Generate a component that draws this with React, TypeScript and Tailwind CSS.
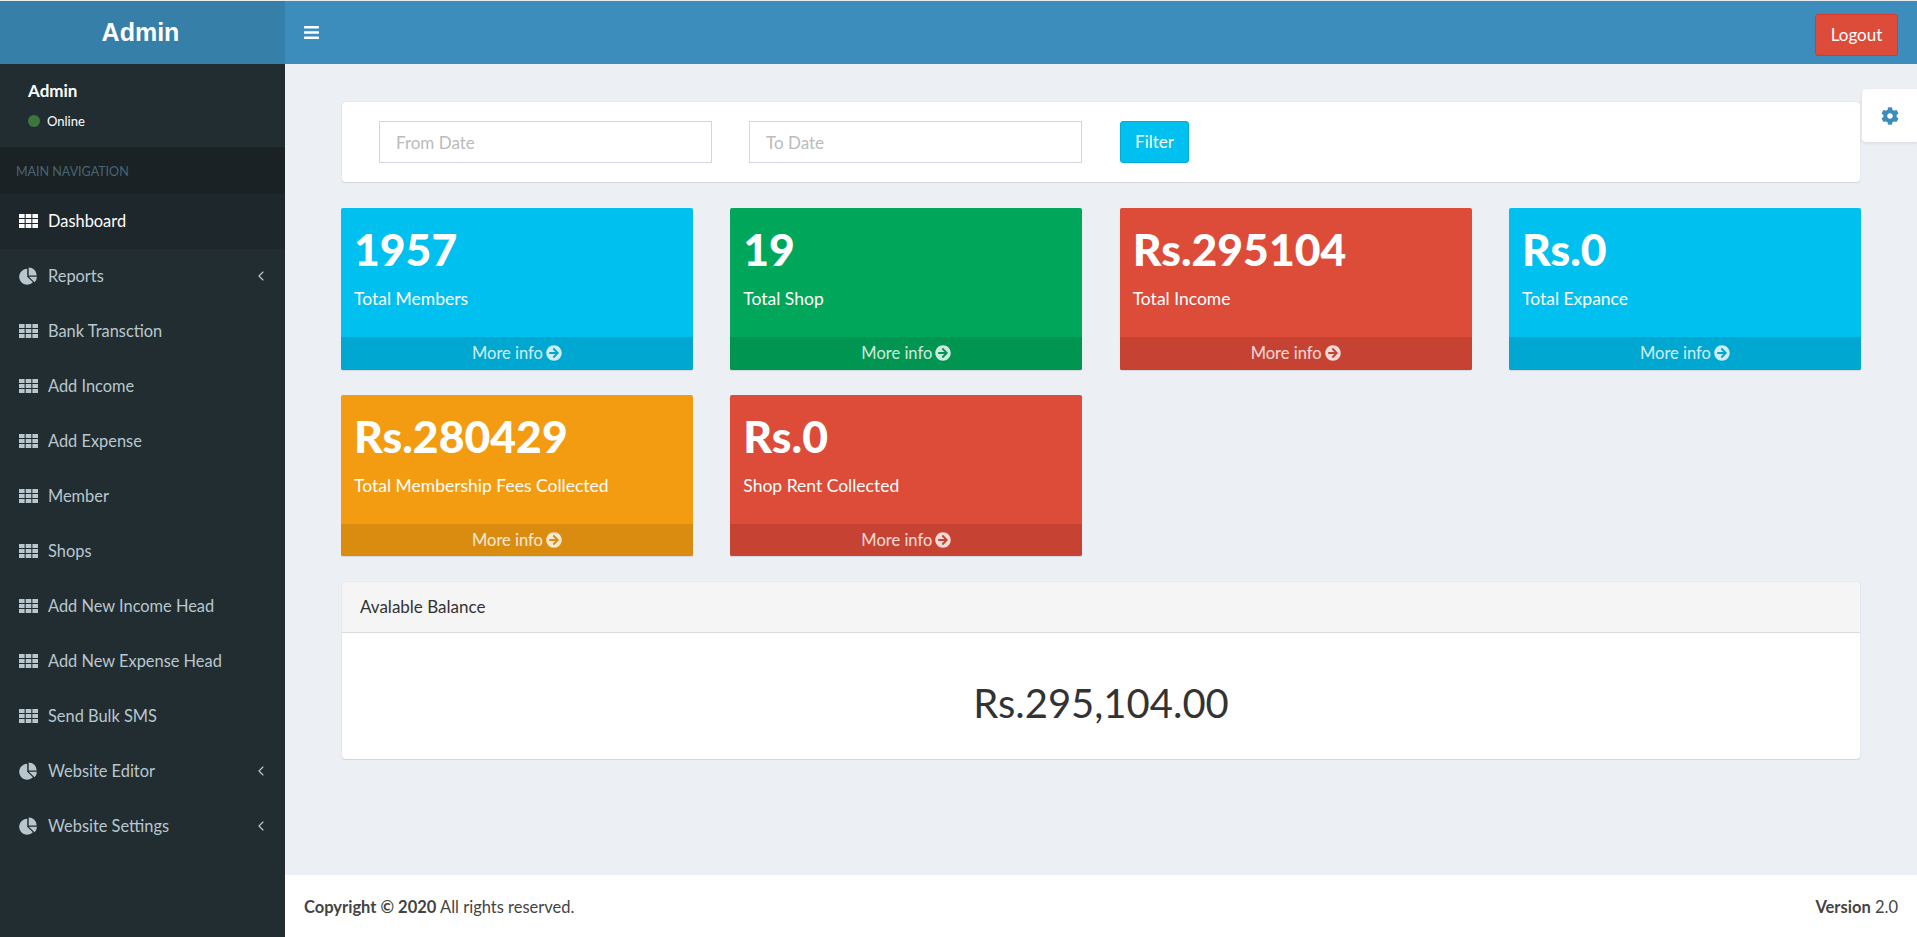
import { ChevronLeft } from "lucide-react";
import { FaArrowCircleRight, FaBars, FaCog } from "react-icons/fa";

const navItems = [
  { label: "Dashboard", icon: "th", active: true },
  { label: "Reports", icon: "pie", arrow: true },
  { label: "Bank Transction", icon: "th" },
  { label: "Add Income", icon: "th" },
  { label: "Add Expense", icon: "th" },
  { label: "Member", icon: "th" },
  { label: "Shops", icon: "th" },
  { label: "Add New Income Head", icon: "th" },
  { label: "Add New Expense Head", icon: "th" },
  { label: "Send Bulk SMS", icon: "th" },
  { label: "Website Editor", icon: "pie", arrow: true },
  { label: "Website Settings", icon: "pie", arrow: true },
];

const cards = [
  { value: "1957", label: "Total Members", bg: "bg-[#00c0ef]", foot: "bg-[#00a7d0]" },
  { value: "19", label: "Total Shop", bg: "bg-[#00a65a]", foot: "bg-[#009551]" },
  { value: "Rs.295104", label: "Total Income", bg: "bg-[#dd4b39]", foot: "bg-[#c64333]" },
  { value: "Rs.0", label: "Total Expance", bg: "bg-[#00c0ef]", foot: "bg-[#00a7d0]" },
  { value: "Rs.280429", label: "Total Membership Fees Collected", bg: "bg-[#f39c12]", foot: "bg-[#da8c10]" },
  { value: "Rs.0", label: "Shop Rent Collected", bg: "bg-[#dd4b39]", foot: "bg-[#c64333]" },
];

function ThIcon() {
  return (
    <svg width="19" height="14" viewBox="0 0 19 14" fill="currentColor" className="shrink-0">
      <path d="M0 0h5.6v3.9H0zM6.7 0h5.6v3.9H6.7zM13.4 0H19v3.9h-5.6zM0 5h5.6v4H0zM6.7 5h5.6v4H6.7zM13.4 5H19v4h-5.6zM0 10.1h5.6V14H0zM6.7 10.1h5.6V14H6.7zM13.4 10.1H19V14h-5.6z" />
    </svg>
  );
}

function PieIcon() {
  return (
    <svg width="19" height="18" viewBox="0 0 18 18" fill="currentColor" className="shrink-0">
      <path d="M7.7 9.7V1.7A8 8 0 1 0 13.36 15.36Z" />
      <path d="M9.2 0.5A8 8 0 0 1 17.2 8.5H9.2Z" />
      <path d="M9.4 9.7H17.4A8 8 0 0 1 15.06 15.36Z" />
    </svg>
  );
}

function Sidebar() {
  return (
    <aside className="flex w-[285px] shrink-0 flex-col bg-[#222d32]">
      <div className="flex h-[63px] items-center justify-center bg-[#367fa9] pr-[4px] font-['Liberation_Sans',sans-serif] text-[25px] font-bold text-white">
        Admin
      </div>
      <div className="h-[83px] pl-[28px] pt-[17px] text-white">
        <p className="text-[17px] leading-[20px] font-bold">Admin</p>
        <div className="mt-[12px] flex items-center gap-[7px] text-[13px] leading-[16px]">
          <span className="h-3 w-3 rounded-full bg-[#3c763d]" />
          Online
        </div>
      </div>
      <div className="flex h-[47px] items-center bg-[#1a2226] pl-[16px] pt-[3px] text-[12.5px] text-[#4b646f]">
        MAIN NAVIGATION
      </div>
      {navItems.map((item) => (
        <div
          key={item.label}
          className={`flex h-[55px] items-center pb-[1px] pl-[19px] pr-[16px] text-[16.4px] ${item.active ? "bg-[#1e282c] text-white" : "text-[#b8c7ce]"}`}
        >
          {item.icon === "th" ? <ThIcon /> : <PieIcon />}
          <span className="ml-[10px]">{item.label}</span>
          {item.arrow && <ChevronLeft className="ml-auto h-[16px] w-[16px]" strokeWidth={1.75} />}
        </div>
      ))}
    </aside>
  );
}

function StatCard({ card }: { card: (typeof cards)[number] }) {
  return (
    <div className={`flex h-[161.6px] flex-col overflow-hidden rounded-[2px] text-white shadow-[0_1px_1px_rgba(0,0,0,0.1)] ${card.bg}`}>
      <div className="h-[129px] shrink-0 px-[13px] pt-[13px]">
        <p className="text-[44.5px] leading-[56px] font-black">{card.value}</p>
        <p className="mt-[10px] text-[17.5px] leading-[24px]">{card.label}</p>
      </div>
      <div className={`flex flex-1 items-center justify-center gap-[3px] text-[16.5px] text-white/80 ${card.foot}`}>
        More info
        <FaArrowCircleRight className="text-[16px]" />
      </div>
    </div>
  );
}

export default function App() {
  return (
    <div className="flex h-[937px] overflow-hidden border-t border-[#e8edf1] bg-[#ecf0f5] font-['Lato',sans-serif] text-[#333]">
      <Sidebar />
      <div className="relative flex min-w-0 flex-1 flex-col">
        <header className="flex h-[63px] shrink-0 items-center justify-between bg-[#3c8dbc] pl-[18px] pr-[19px]">
          <FaBars className="text-[17px] text-white" />
          <button className="mt-[5px] h-[42px] w-[83px] rounded-[3px] border border-[#d73925] bg-[#dd4b39] text-[17px] text-white">
            Logout
          </button>
        </header>

        <main className="flex-1 px-[56px] pt-[38px]">
          <div className="mx-px flex h-[80px] items-center rounded-[3px] bg-white pl-[37px] shadow-[0_0_1px_rgba(0,0,0,0.25),0_1px_1px_rgba(0,0,0,0.08)]">
            <input placeholder="From Date" className="h-[42px] w-[333px] border border-[#d2d6de] px-[16px] text-[17px] placeholder:text-[#bbb]" />
            <input placeholder="To Date" className="ml-[37px] h-[42px] w-[333px] border border-[#d2d6de] px-[16px] text-[17px] placeholder:text-[#bbb]" />
            <button className="ml-[38px] h-[42px] w-[69px] rounded-[3px] border border-[#00acd6] bg-[#00c0ef] text-[17px] text-white">
              Filter
            </button>
          </div>

          <div className="mt-[26px] grid grid-cols-4 gap-x-[37.3px] gap-y-[25px]">
            {cards.map((card) => (
              <StatCard key={card.label} card={card} />
            ))}
          </div>

          <div className="mx-px mt-[25.4px] h-[177px] overflow-hidden rounded-[3px] bg-white shadow-[0_0_1px_rgba(0,0,0,0.25),0_1px_1px_rgba(0,0,0,0.08)]">
            <div className="flex h-[51px] items-center border-b border-[#ddd] bg-[#f5f5f5] pl-[18px] text-[17px]">
              Avalable Balance
            </div>
            <p className="pt-[42px] text-center text-[40px] leading-[56px]">Rs.295,104.00</p>
          </div>
        </main>

        <footer className="flex h-[62px] shrink-0 items-center justify-between bg-white pl-[19px] pr-[19px] pt-[2px] text-[16.5px] text-[#444]">
          <p>
            <b>Copyright © 2020</b> All rights reserved.
          </p>
          <p>
            <b>Version</b> 2.0
          </p>
        </footer>

        {/* settings tab on the right edge */}
        <div className="absolute right-0 top-[88px] flex h-[53px] w-[55px] items-center justify-center rounded-l-[4px] bg-white shadow-[0_1px_3px_rgba(0,0,0,0.1)]">
          <FaCog className="text-[18px] text-[#3c8dbc]" />
        </div>
      </div>
    </div>
  );
}
